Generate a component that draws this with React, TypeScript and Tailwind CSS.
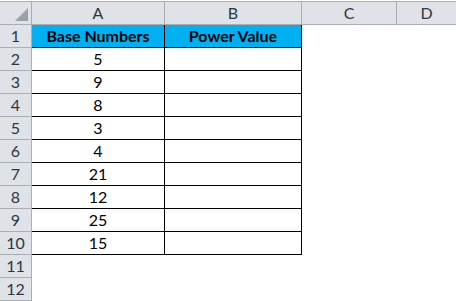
import React from "react";

const rows: [string, string][] = [
  ["Base Numbers", "Power Value"],
  ["5", ""],
  ["9", ""],
  ["8", ""],
  ["3", ""],
  ["4", ""],
  ["21", ""],
  ["12", ""],
  ["25", ""],
  ["15", ""],
];

const font = { fontFamily: "Lato, 'Open Sans', sans-serif" };

export default function App() {
  return (
    <div className="w-[456px] h-[301px] overflow-hidden bg-white" style={font}>
      <div className="mt-px border-t border-[#a9aeb4] grid grid-cols-[32px_133px_137px_95px_1fr] text-[16px]">
        {/* header row */}
        <div className="h-[23px] bg-[#dfe2e6] border-r border-b border-[#a9aeb4] relative">
          <svg className="absolute left-0 top-0" width="32" height="23" viewBox="0 0 32 23">
            <polygon points="28,6 28,19 15,19" fill="#9ba0a6" />
          </svg>
        </div>
        {["A", "B", "C", "D"].map((c, i) => (
          <div
            key={c}
            className={`h-[23px] bg-[#dfe2e6] border-b border-[#a9aeb4] flex items-center justify-center text-[#2c3644] ${i < 3 ? "border-r" : ""}`}
          >
            {c}
          </div>
        ))}
        {Array.from({ length: 12 }).map((_, r) => {
          const data = rows[r];
          return (
            <React.Fragment key={r}>
              <div className="h-[23px] bg-[#dfe2e6] border-r border-b border-[#a9aeb4] flex items-center justify-center text-[#2c3644]">
                {r + 1}
              </div>
              {data ? (
                <>
                  <div
                    className={`h-[23px] border-r border-b border-black flex items-center justify-center text-black ${r === 0 ? "bg-[#00b0f0] font-bold" : ""}`}
                  >
                    {data[0]}
                  </div>
                  <div
                    className={`h-[23px] border-r border-b border-black flex items-center justify-center text-black ${r === 0 ? "bg-[#00b0f0] font-bold" : ""}`}
                  >
                    {data[1]}
                  </div>
                </>
              ) : (
                <>
                  <div className="h-[23px]" />
                  <div className="h-[23px]" />
                </>
              )}
              <div className="h-[23px]" />
              <div className="h-[23px]" />
            </React.Fragment>
          );
        })}
      </div>
    </div>
  );
}
